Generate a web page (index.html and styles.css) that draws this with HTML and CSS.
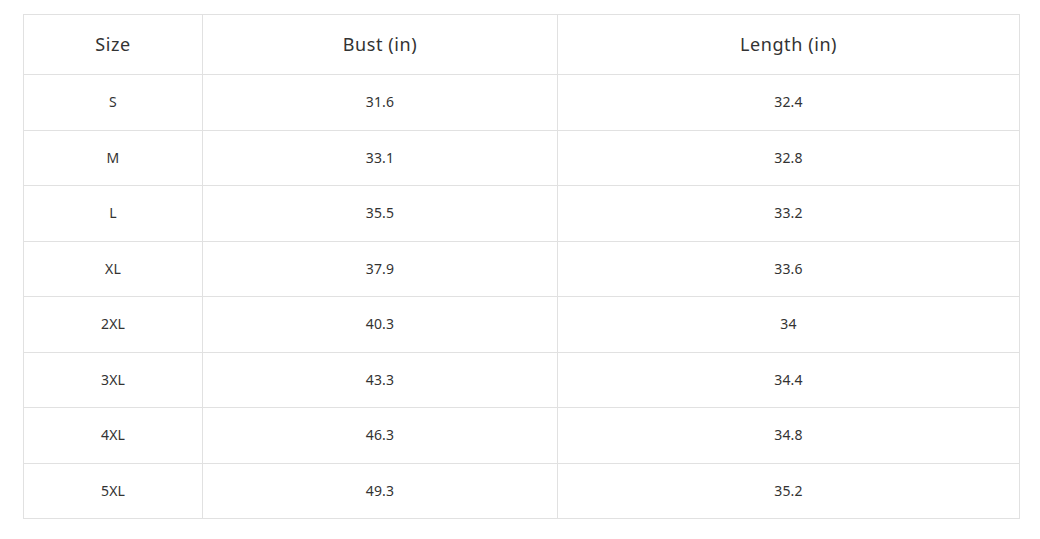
FILE: index.html
```html
<!DOCTYPE html>
<html>
<head>
<meta charset="utf-8">
<link rel="stylesheet" href="styles.css">
</head>
<body>
<table class="size-table">
  <colgroup>
    <col class="c1"><col class="c2"><col class="c3">
  </colgroup>
  <thead>
    <tr><th>Size</th><th>Bust (in)</th><th>Length (in)</th></tr>
  </thead>
  <tbody>
    <tr><td>S</td><td>31.6</td><td>32.4</td></tr>
    <tr><td>M</td><td>33.1</td><td>32.8</td></tr>
    <tr><td>L</td><td>35.5</td><td>33.2</td></tr>
    <tr><td>XL</td><td>37.9</td><td>33.6</td></tr>
    <tr><td>2XL</td><td>40.3</td><td>34</td></tr>
    <tr><td>3XL</td><td>43.3</td><td>34.4</td></tr>
    <tr><td>4XL</td><td>46.3</td><td>34.8</td></tr>
    <tr><td>5XL</td><td>49.3</td><td>35.2</td></tr>
  </tbody>
</table>
</body>
</html>
```
FILE: styles.css
```css
html, body {
  margin: 0;
  background: #fff;
}
body {
  padding: 14px 0 0 23px;
  font-family: "Noto Sans", "Open Sans", sans-serif;
  color: #333;
}
.size-table {
  border-collapse: collapse;
  table-layout: fixed;
  width: 996px;
}
.c1 { width: 179px; }
.c2 { width: 355px; }
.c3 { width: 462px; }
.size-table th,
.size-table td {
  border: 1px solid #e1e1e1;
  text-align: center;
  padding: 0;
}
.size-table th {
  height: 57px;
  padding-bottom: 2px;
  font-size: 18px;
  letter-spacing: 0.6px;
  font-weight: 400;
  color: #333;
}
.size-table td {
  height: 53.5px;
  padding-bottom: 1px;
  font-size: 14px;
  letter-spacing: 0.2px;
  color: #333;
}
```
